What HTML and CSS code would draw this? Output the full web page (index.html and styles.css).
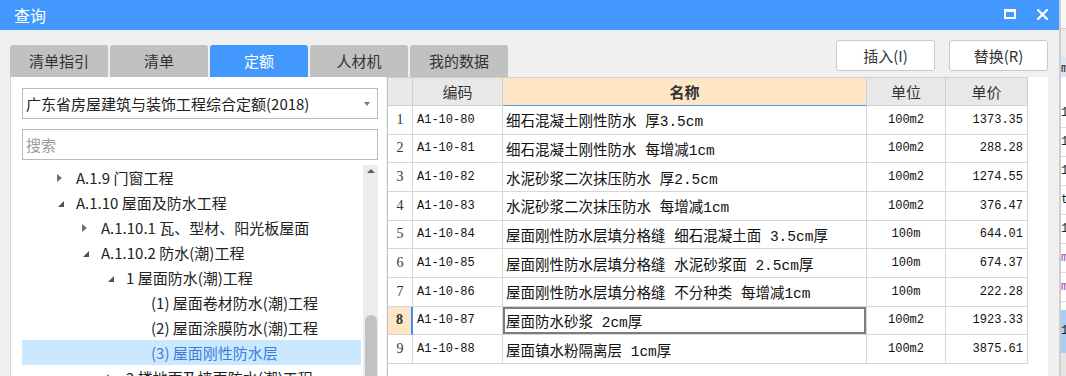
FILE: index.html
```html
<!DOCTYPE html>
<html lang="zh-CN">
<head>
  <meta charset="UTF-8" />
  <title>查询</title>
  <link rel="stylesheet" href="styles.css">
</head>
<body>
  <div class="dialog">
    <div class="titlebar">
      <span class="title">查询</span>
      <div class="win-btns">
        <svg class="win-max" width="12" height="10" viewBox="0 0 12 10">
          <rect x="1" y="1.5" width="10" height="7.5" fill="none" stroke="#fff" stroke-width="2"/>
          <rect x="0" y="0" width="12" height="3" fill="#fff"/>
        </svg>
        <svg class="win-close" width="11" height="11" viewBox="0 0 11 11">
          <path d="M1 1 L10 10 M10 1 L1 10" stroke="#fff" stroke-width="2.2" stroke-linecap="square"/>
        </svg>
      </div>
    </div>

    <div class="content">
      <div class="toolbar">
        <div class="tabs">
          <div class="tab">清单指引</div>
          <div class="tab">清单</div>
          <div class="tab active">定额</div>
          <div class="tab">人材机</div>
          <div class="tab">我的数据</div>
        </div>
        <div class="actions">
          <button class="btn">插入(I)</button>
          <button class="btn">替换(R)</button>
        </div>
      </div>

      <div class="main">
        <div class="left-panel">
          <div class="select">
            <span>广东省房屋建筑与装饰工程综合定额(2018)</span>
            <span class="caret"></span>
          </div>
          <input class="search" type="text" placeholder="搜索" />
          <div class="tree-wrap">
            <ul class="tree">
              <li class="l0"><span class="tw closed"></span>A.1.9 门窗工程</li>
              <li class="l0"><span class="tw open"></span>A.1.10 屋面及防水工程</li>
              <li class="l1"><span class="tw closed"></span>A.1.10.1 瓦、型材、阳光板屋面</li>
              <li class="l1"><span class="tw open"></span>A.1.10.2 防水(潮)工程</li>
              <li class="l2"><span class="tw open"></span>1 屋面防水(潮)工程</li>
              <li class="l3"><span class="tw"></span>(1) 屋面卷材防水(潮)工程</li>
              <li class="l3"><span class="tw"></span>(2) 屋面涂膜防水(潮)工程</li>
              <li class="l3 selected"><span class="tw"></span>(3) 屋面刚性防水层</li>
              <li class="l2"><span class="tw closed"></span>2 楼地面及墙面防水(潮)工程</li>
            </ul>
            <div class="vscroll">
              <span class="up"></span>
              <span class="thumb"></span>
            </div>
          </div>
        </div>

        <div class="grid-panel">
          <table class="grid">
            <thead>
              <tr>
                <th class="c-no"></th>
                <th class="c-code">编码</th>
                <th class="c-name">名称</th>
                <th class="c-unit">单位</th>
                <th class="c-price">单价</th>
              </tr>
            </thead>
            <tbody>
              <tr><td class="c-no">1</td><td class="c-code">A1-10-80</td><td class="c-name">细石混凝土刚性防水 厚3.5cm</td><td class="c-unit">100m2</td><td class="c-price">1373.35</td></tr>
              <tr><td class="c-no">2</td><td class="c-code">A1-10-81</td><td class="c-name">细石混凝土刚性防水 每增减1cm</td><td class="c-unit">100m2</td><td class="c-price">288.28</td></tr>
              <tr><td class="c-no">3</td><td class="c-code">A1-10-82</td><td class="c-name">水泥砂浆二次抹压防水 厚2.5cm</td><td class="c-unit">100m2</td><td class="c-price">1274.55</td></tr>
              <tr><td class="c-no">4</td><td class="c-code">A1-10-83</td><td class="c-name">水泥砂浆二次抹压防水 每增减1cm</td><td class="c-unit">100m2</td><td class="c-price">376.47</td></tr>
              <tr><td class="c-no">5</td><td class="c-code">A1-10-84</td><td class="c-name">屋面刚性防水层填分格缝 细石混凝土面 3.5cm厚</td><td class="c-unit">100m</td><td class="c-price">644.01</td></tr>
              <tr><td class="c-no">6</td><td class="c-code">A1-10-85</td><td class="c-name">屋面刚性防水层填分格缝 水泥砂浆面 2.5cm厚</td><td class="c-unit">100m</td><td class="c-price">674.37</td></tr>
              <tr><td class="c-no">7</td><td class="c-code">A1-10-86</td><td class="c-name">屋面刚性防水层填分格缝 不分种类 每增减1cm</td><td class="c-unit">100m</td><td class="c-price">222.28</td></tr>
              <tr class="current"><td class="c-no">8</td><td class="c-code">A1-10-87</td><td class="c-name">屋面防水砂浆 2cm厚</td><td class="c-unit">100m2</td><td class="c-price">1923.33</td></tr>
              <tr><td class="c-no">9</td><td class="c-code">A1-10-88</td><td class="c-name">屋面镇水粉隔离层 1cm厚</td><td class="c-unit">100m2</td><td class="c-price">3875.61</td></tr>
            </tbody>
          </table>
        </div>
      </div>
    </div>
  </div>

  <div class="side">
    <div class="s-top"></div>
    <div class="s-head"></div>
    <div class="s-sel">m</div>
    <div class="s-blank"></div>
    <div class="s-row">1</div>
    <div class="s-row">1</div>
    <div class="s-row">1</div>
    <div class="s-row">t</div>
    <div class="s-row">1</div>
    <div class="s-row purple">m</div>
    <div class="s-row purple">m</div>
    <div class="s-gap"></div>
    <div class="s-blue">1</div>
    <div class="s-rest"></div>
  </div>
</body>
</html>
```

FILE: styles.css
```css
* {
  box-sizing: border-box;
}
body {
  margin: 0;
  height: 376px;
  overflow: hidden;
  display: flex;
  background: #f0f0f0;
  font-family: "Noto Sans CJK SC", "Noto Sans", sans-serif;
  color: #222;
}
.dialog {
  width: 1059px;
  flex: none;
  display: flex;
  flex-direction: column;
}
.titlebar {
  height: 30px;
  flex: none;
  background: #4398fd;
  color: #fff;
  display: flex;
  align-items: center;
  padding: 0 11px 0 14px;
}
.title {
  font-size: 16px;
  line-height: 30px;
}
.win-btns {
  margin-left: auto;
  display: flex;
  align-items: center;
  gap: 21px;
}
.win-max {
  margin-top: -3px;
}
.win-close {
  margin-top: -2px;
}
.content {
  flex: 1;
  min-height: 0;
  display: flex;
  flex-direction: column;
  padding: 0 11px 0 10px;
}
.toolbar {
  height: 47px;
  flex: none;
  display: flex;
  justify-content: space-between;
}
.tabs {
  display: flex;
  gap: 2px;
  align-self: flex-end;
}
.tab {
  width: 98px;
  height: 32px;
  line-height: 32px;
  text-align: center;
  font-size: 15px;
  color: #333;
  background: #c1c1c1;
  border-radius: 3px 3px 0 0;
}
.tab.active {
  background: #4398fd;
  color: #fff;
}
.actions {
  display: flex;
  gap: 14px;
  padding-top: 10px;
}
.btn {
  width: 99px;
  height: 31px;
  background: #fff;
  border: 1px solid #c9c9c9;
  border-radius: 3px;
  font-family: inherit;
  font-size: 15px;
  color: #333;
  padding: 0;
}
.main {
  flex: 1;
  min-height: 0;
  display: flex;
  overflow: hidden;
}
.left-panel {
  width: 376px;
  flex: none;
  background: #fff;
  border-left: 1px solid #d4d4d4;
  padding: 11px 8px 0 11px;
}
.select {
  height: 31px;
  border: 1px solid #b9b9b9;
  display: flex;
  align-items: center;
  justify-content: space-between;
  padding: 0 7px 0 3px;
  font-size: 15px;
  line-height: 20px;
  color: #222;
}
.caret {
  width: 0;
  height: 0;
  border-top: 4px solid #7a7a7a;
  border-left: 3.5px solid transparent;
  border-right: 3.5px solid transparent;
}
.search {
  display: block;
  width: 100%;
  height: 31px;
  margin-top: 10px;
  border: 1px solid #b9b9b9;
  padding: 0 3px;
  font-family: inherit;
  font-size: 15px;
  outline: none;
}
.search::placeholder {
  color: #9c9c9c;
}
.tree-wrap {
  margin-top: 5px;
  display: flex;
  height: 240px;
}
.tree {
  list-style: none;
  margin: 0;
  padding: 0;
  width: 341px;
  flex: none;
}
.tree li {
  width: 339px;
  height: 25px;
  display: flex;
  align-items: center;
  font-size: 15px;
  line-height: 20px;
  color: #222;
  white-space: nowrap;
}
.tree li.l0 { padding-left: 35px; }
.tree li.l1 { padding-left: 60px; }
.tree li.l2 { padding-left: 85px; }
.tree li.l3 { padding-left: 110px; }
.tree li.selected {
  background: #cce8ff;
  color: #3b7fd9;
}
.tw {
  width: 19px;
  flex: none;
  display: flex;
  align-items: center;
}
.tw.closed::before {
  content: "";
  width: 0;
  height: 0;
  border-left: 5px solid #707070;
  border-top: 4.5px solid transparent;
  border-bottom: 4.5px solid transparent;
}
.tw.open::before {
  content: "";
  width: 0;
  height: 0;
  margin-left: 1px;
  margin-top: 2px;
  border-bottom: 6px solid #505050;
  border-left: 6px solid transparent;
}
.vscroll {
  width: 15px;
  flex: none;
  background: #ececec;
  display: flex;
  flex-direction: column;
  align-items: center;
}
.vscroll .up {
  margin-top: 4px;
  width: 0;
  height: 0;
  border-bottom: 4px solid #5e5e5e;
  border-left: 4px solid transparent;
  border-right: 4px solid transparent;
}
.vscroll .thumb {
  margin-top: 142px;
  width: 12px;
  height: 90px;
  border-radius: 6px;
  background: #c2c2c2;
}
.grid-panel {
  flex: 1;
  margin-left: 1px;
  background: #fff;
  border-left: 1px solid #c4c4c4;
}
.grid {
  width: 640px;
  table-layout: fixed;
  border-collapse: separate;
  border-spacing: 0;
  font-size: 12px;
}
.grid th,
.grid td {
  border-right: 1px solid #d6d6d6;
  border-bottom: 1px solid #d6d6d6;
  padding: 0;
  white-space: nowrap;
  overflow: hidden;
}
.grid .c-no { width: 25px; }
.grid .c-code { width: 90px; }
.grid .c-name { width: 364px; }
.grid .c-unit { width: 79px; }
.grid .c-price { width: 82px; }
.grid th {
  height: 29px;
  background: #e8e8e8;
  font-weight: 400;
  font-size: 15px;
  color: #333;
  text-align: center;
  border-top: 1px solid #dcdcdc;
  border-color: #d0d0d0;
}
.grid th.c-name {
  background: #fde5c6;
  font-weight: 700;
  border-bottom: 1px solid #4b9cf2;
}
.grid td {
  height: 28.67px;
  color: #111;
}
.grid td.c-no {
  font-family: "Liberation Serif", serif;
  font-size: 14px;
  color: #333;
  text-align: center;
}
.grid td.c-code {
  font-family: "Liberation Mono", monospace;
  padding-left: 4px;
}
.grid td.c-name {
  font-family: "Liberation Mono", "Noto Sans CJK SC", monospace;
  font-size: 14.5px;
  padding-left: 3px;
}
.grid td.c-unit {
  font-family: "Liberation Mono", monospace;
  text-align: center;
}
.grid td.c-price {
  font-family: "Liberation Mono", monospace;
  text-align: right;
  padding-right: 4px;
}
.grid tr.current td.c-no {
  background: #fde5c6;
  font-weight: 700;
  border-right: 2px solid #3d8ef0;
}
.grid tr.current td.c-name {
  box-shadow: inset 0 0 0 2px #7c7c7c;
}
.side {
  flex: 1;
  min-width: 0;
  border-left: 2px solid #cfcfcf;
  background: #f0f0f0;
  display: flex;
  flex-direction: column;
  font-family: "Liberation Mono", monospace;
  font-size: 12px;
  color: #222;
  overflow: hidden;
}
.s-top {
  height: 29px;
  background: #f7f7f7;
  border-bottom: 1px solid #d0d0d0;
}
.s-head {
  height: 28px;
  background: #ececec;
}
.s-sel {
  height: 20px;
  line-height: 24px;
  background: #dbe6f3;
}
.s-blank {
  height: 22px;
  background: #fff;
}
.s-row {
  height: 29px;
  line-height: 28px;
  background: #fff;
  border-bottom: 1px solid #dcdcdc;
}
.s-row.purple {
  color: #a23cc4;
}
.s-gap {
  height: 8px;
  background: #fff;
}
.s-blue {
  height: 43px;
  line-height: 43px;
  background: #a8cdf6;
}
.s-rest {
  flex: 1;
  background: #e6e6e6;
}
```
